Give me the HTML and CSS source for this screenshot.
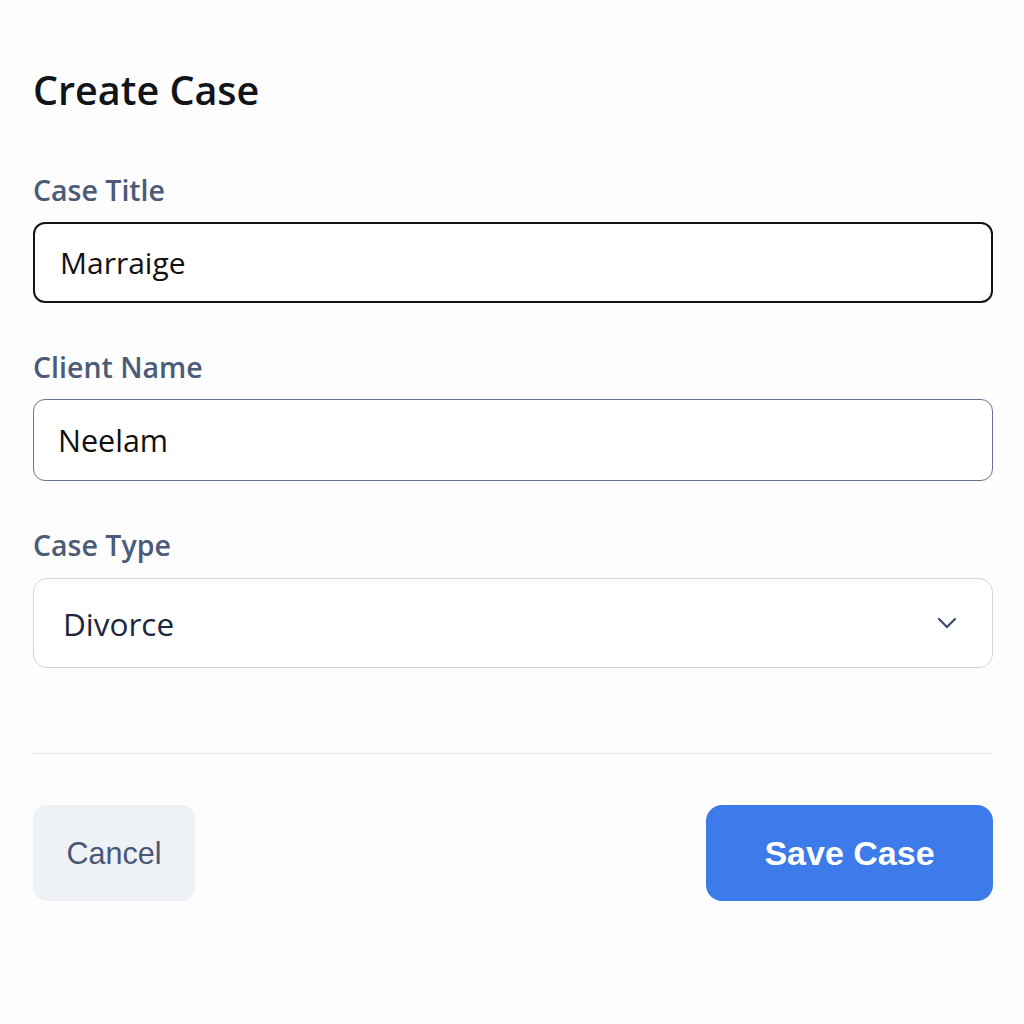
FILE: index.html
```html
<!DOCTYPE html>
<html lang="en">
<head>
<meta charset="utf-8">
<title>Create Case</title>
<link rel="stylesheet" href="styles.css">
</head>
<body>
<main class="page">
  <h1 class="title">Create Case</h1>
  <form class="form">
    <div class="field">
      <label class="label">Case Title</label>
      <div class="input input-focus">Marraige</div>
    </div>
    <div class="field">
      <label class="label">Client Name</label>
      <div class="input input-mid">Neelam</div>
    </div>
    <div class="field field-select">
      <label class="label">Case Type</label>
      <div class="select">
        <span class="select-value">Divorce</span>
        <svg class="chevron" width="22" height="14" viewBox="0 0 22 14"><path d="M3 3 L11 11 L19 3" fill="none" stroke="#3b4a66" stroke-width="2.2" stroke-linecap="round" stroke-linejoin="round"/></svg>
      </div>
    </div>
  </form>
  <hr class="divider">
  <div class="actions">
    <button class="btn btn-cancel" type="button">Cancel</button>
    <button class="btn btn-save" type="button">Save Case</button>
  </div>
</main>
</body>
</html>
```
FILE: styles.css
```css
* { box-sizing: border-box; }
html, body { margin: 0; padding: 0; background: #fdfdfd; }
body { font-family: "Open Sans", "Noto Sans", sans-serif; }
.page { padding: 64px 31px 0 33px; }
.title {
  margin: 0;
  font-size: 39.5px;
  font-weight: 600;
  color: #111418;
  line-height: 52px;
}
.form { display: flex; flex-direction: column; gap: 46px; margin-top: 56px; }
.field { display: flex; flex-direction: column; gap: 14px; }
.field-select { gap: 15px; }
.label {
  font-size: 28.5px;
  font-weight: 600;
  color: #4b5b78;
  line-height: 36px;
}
.input {
  height: 81px;
  border-radius: 12px;
  background: #fff;
  display: flex;
  align-items: center;
  color: #111;
}
.input-focus { border: 2.5px solid #141414; padding-left: 25px; font-size: 30px; }
.input-mid { border: 1.5px solid #66748e; padding-left: 24px; font-size: 30.5px; height: 82px; }
.select {
  height: 90px;
  border: 1.5px solid #cfd6e2;
  border-radius: 14px;
  background: #fff;
  display: flex;
  align-items: center;
  justify-content: space-between;
  padding: 0 34px 0 29px;
}
.select-value { font-size: 31.5px; color: #1c2740; }
.chevron { display: block; }
.divider { border: 0; border-top: 1.5px solid #e1e6ee; margin: 85px 0 0; }
.actions { display: flex; justify-content: space-between; margin-top: 51px; }
.btn {
  height: 96px;
  border: 0;
  font-family: "Liberation Sans", Arial, sans-serif;
}
.btn-cancel {
  width: 162px;
  background: #eef1f6;
  border-radius: 14px;
  color: #4a5877;
  font-size: 30.5px;
}
.btn-save {
  width: 287px;
  background: #3c7be9;
  border-radius: 16px;
  color: #fff;
  font-size: 34px;
  font-weight: 700;
}
```
